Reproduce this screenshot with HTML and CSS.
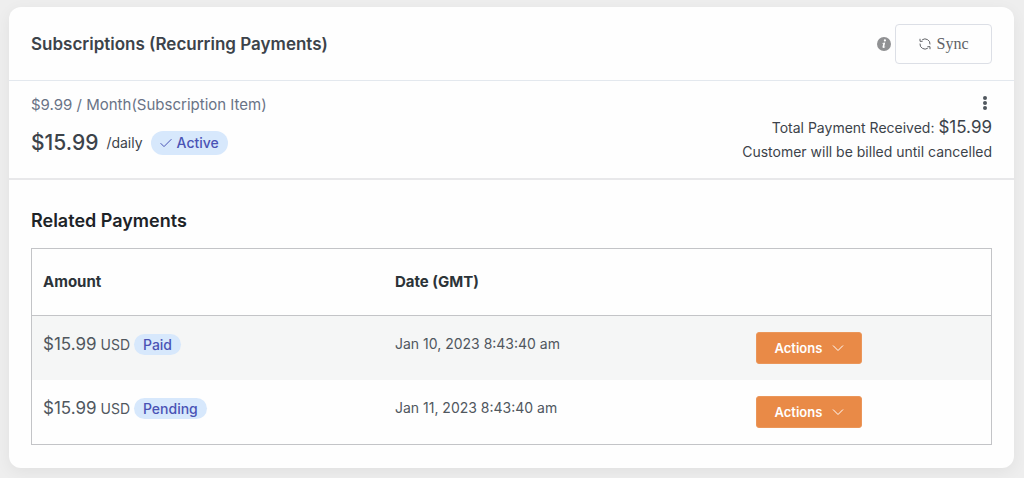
FILE: index.html
```
<!DOCTYPE html>
<html lang="en">

<head>
    <meta charset="UTF-8">
    <meta name="viewport" content="width=device-width, initial-scale=1.0">
    <title>Subscriptions</title>
    <link rel="stylesheet" href="styles.css">
</head>

<body>
    <main class="card">
        <header class="card-header">
            <h2 class="card-title">Subscriptions (Recurring Payments)</h2>
            <div class="header-actions">
                <svg class="info-icon" viewBox="0 0 14 14" aria-hidden="true">
                    <circle cx="7" cy="7" r="7" fill="#909193" />
                    <circle cx="7.9" cy="3.4" r="1.1" fill="#fff" />
                    <path d="M5.3 5.9L8.2 5.4L7.2 9.8L8.3 9.5L8.1 10.2Q5.2 11.9 5.5 9.8L6.3 6.5L5.2 6.4Z" fill="#fff" />
                </svg>
                <button class="sync-btn" type="button">
                    <svg class="sync-icon" viewBox="0 0 12 12" fill="none" stroke="#606266" aria-hidden="true">
                        <path d="M1 0.8V3.3H3.6M3.2 1.8A5 5 0 0 1 11 6.4M11 11.2V8.7H8.4M8.8 10.2A5 5 0 0 1 1 5.6" />
                    </svg>
                    Sync
                </button>
            </div>
        </header>

        <section class="subscription">
            <div class="plan">
                <p class="plan-name">$9.99 / Month(Subscription Item)</p>
                <div class="plan-price">
                    <span class="price">$15.99</span>
                    <span class="interval">/daily</span>
                    <span class="badge badge-active">
                        <svg class="check-icon" viewBox="0 0 12 10" fill="none" stroke="#4a53b5" aria-hidden="true">
                            <path d="M0.6 5.2L4 8.6L11.4 1.2" />
                        </svg>
                        Active
                    </span>
                </div>
            </div>
            <div class="summary">
                <button class="more-btn" type="button" aria-label="More">
                    <svg class="more-icon" viewBox="0 0 6 14" fill="#50575e" aria-hidden="true">
                        <circle cx="3" cy="2" r="2" />
                        <circle cx="3" cy="7" r="2" />
                        <circle cx="3" cy="12" r="2" />
                    </svg>
                </button>
                <p>Total Payment Received: <span class="total">$15.99</span></p>
                <p>Customer will be billed until cancelled</p>
            </div>
        </section>

        <section class="payments">
            <h3 class="payments-title">Related Payments</h3>
            <table class="payments-table">
                <thead>
                    <tr>
                        <th class="col-amount">Amount</th>
                        <th class="col-date">Date (GMT)</th>
                        <th></th>
                    </tr>
                </thead>
                <tbody>
                    <tr>
                        <td><span class="amount">$15.99</span> USD <span class="badge">Paid</span></td>
                        <td>Jan 10, 2023 8:43:40 am</td>
                        <td>
                            <button class="actions-btn" type="button">
                                Actions
                                <svg class="arrow-icon" viewBox="0 0 12 8" fill="none" stroke="#fff" aria-hidden="true">
                                    <path d="M1 1.5L6 6.5L11 1.5" />
                                </svg>
                            </button>
                        </td>
                    </tr>
                    <tr>
                        <td><span class="amount">$15.99</span> USD <span class="badge">Pending</span></td>
                        <td>Jan 11, 2023 8:43:40 am</td>
                        <td>
                            <button class="actions-btn" type="button">
                                Actions
                                <svg class="arrow-icon" viewBox="0 0 12 8" fill="none" stroke="#fff" aria-hidden="true">
                                    <path d="M1 1.5L6 6.5L11 1.5" />
                                </svg>
                            </button>
                        </td>
                    </tr>
                </tbody>
            </table>
        </section>
    </main>
</body>

</html>
```
FILE: styles.css
```
* {
    box-sizing: border-box;
}

body {
    margin: 0;
    padding: 7px 10px 10px 9px;
    background-color: #eeeeee;
    font-family: Inter, "Liberation Sans", sans-serif;
    font-size: 14px;
    line-height: 24px;
    color: #3c434a;
}

h2,
h3,
p {
    margin: 0;
}

button {
    font-family: inherit;
    cursor: pointer;
}

.card {
    background-color: #fefefe;
    border-radius: 12px;
    box-shadow: 0 4px 16px rgba(0, 0, 0, 0.06);
}

.card-header {
    display: flex;
    align-items: center;
    justify-content: space-between;
    padding: 17px 22px 16px;
    border-bottom: 1px solid #e3e8ee;
}

.card-title {
    font-size: 17px;
    font-weight: 600;
}

.header-actions {
    display: flex;
    align-items: center;
    gap: 4px;
}

.info-icon {
    width: 14px;
    height: 14px;
}

.sync-btn {
    display: flex;
    align-items: center;
    justify-content: center;
    gap: 6px;
    width: 97px;
    height: 40px;
    background-color: #fefefe;
    border: 1px solid #dcdfe6;
    border-radius: 4px;
    font-family: "Liberation Serif", serif;
    font-size: 16px;
    color: #606266;
}

.sync-icon {
    width: 12px;
    height: 12px;
}

/* subscription */
.subscription {
    display: flex;
    justify-content: space-between;
    padding: 12px 22px 14px;
    border-bottom: 2px solid #e8e8ea;
}

.plan-name {
    font-size: 15px;
    color: #697386;
}

.plan-price {
    display: flex;
    align-items: center;
    gap: 8px;
    margin-top: 14px;
}

.price {
    font-size: 21px;
    font-weight: 500;
}

.badge {
    display: inline-block;
    padding: 0 9px;
    background-color: #d7e8fc;
    border-radius: 12px;
    font-size: 14px;
    font-weight: 500;
    line-height: 21px;
    color: #4a53b5;
}

.badge-active {
    display: flex;
    align-items: center;
    gap: 5px;
    line-height: 24px;
}

.check-icon {
    width: 12px;
    height: 10px;
}

.summary {
    display: flex;
    flex-direction: column;
    align-items: flex-end;
}

.more-btn {
    display: flex;
    margin: 3px 4px 5px;
    padding: 0;
    background: none;
    border: none;
}

.more-icon {
    width: 6px;
    height: 14px;
}

.total {
    font-size: 17px;
}

/* related payments */
.payments {
    padding: 29px 22px 23px;
}

.payments-title {
    margin-bottom: 15px;
    font-size: 18px;
    font-weight: 600;
    color: #1d2327;
}

.payments-table {
    width: 100%;
    table-layout: fixed;
    border: 1px solid #c3c4c7;
    border-spacing: 0;
}

.payments-table th {
    padding: 21px 11px;
    border-bottom: 1px solid #c3c4c7;
    text-align: left;
    font-size: 15px;
    font-weight: 700;
    color: #2c3338;
}

.payments-table td {
    padding: 16px 11px;
    vertical-align: top;
    color: #50575e;
}

.payments-table tbody tr:nth-child(odd) {
    background-color: #f5f6f6;
}

.col-amount {
    width: 36.7%;
}

.col-date {
    width: 37.7%;
}

.amount {
    font-size: 17px;
}

.actions-btn {
    display: flex;
    align-items: center;
    gap: 10px;
    height: 32px;
    padding: 0 17px;
    background-color: #e98a47;
    border: 1px solid #eb9659;
    border-radius: 3px;
    font-size: 13px;
    font-weight: 600;
    color: #fff;
}

.arrow-icon {
    width: 12px;
    height: 8px;
}
```
